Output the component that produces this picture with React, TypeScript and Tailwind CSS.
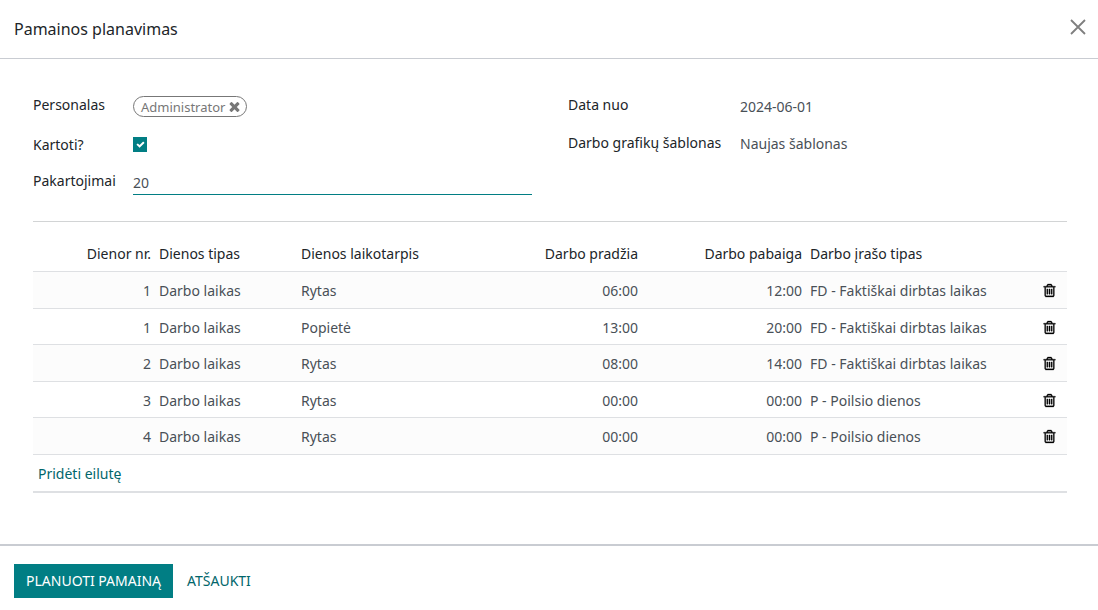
import { useState } from "react";

interface ShiftLine {
  id: number;
  day: number;
  dayType: string;
  period: string;
  start: string;
  end: string;
  entryType: string;
}

const initialLines: ShiftLine[] = [
  { id: 1, day: 1, dayType: "Darbo laikas", period: "Rytas", start: "06:00", end: "12:00", entryType: "FD - Faktiškai dirbtas laikas" },
  { id: 2, day: 1, dayType: "Darbo laikas", period: "Popietė", start: "13:00", end: "20:00", entryType: "FD - Faktiškai dirbtas laikas" },
  { id: 3, day: 2, dayType: "Darbo laikas", period: "Rytas", start: "08:00", end: "14:00", entryType: "FD - Faktiškai dirbtas laikas" },
  { id: 4, day: 3, dayType: "Darbo laikas", period: "Rytas", start: "00:00", end: "00:00", entryType: "P - Poilsio dienos" },
  { id: 5, day: 4, dayType: "Darbo laikas", period: "Rytas", start: "00:00", end: "00:00", entryType: "P - Poilsio dienos" },
];

function TrashIcon() {
  return (
    <svg viewBox="0 0 1792 1792" className="size-[15px] fill-current stroke-current stroke-[40]" aria-hidden="true">
      <path d="M704 736v576q0 14-9 23t-23 9h-64q-14 0-23-9t-9-23v-576q0-14 9-23t23-9h64q14 0 23 9t9 23zm256 0v576q0 14-9 23t-23 9h-64q-14 0-23-9t-9-23v-576q0-14 9-23t23-9h64q14 0 23 9t9 23zm256 0v576q0 14-9 23t-23 9h-64q-14 0-23-9t-9-23v-576q0-14 9-23t23-9h64q14 0 23 9t9 23zm128 724v-948h-896v948q0 22 7 40.5t14.5 27 10.5 8.5h832q3 0 10.5-8.5t14.5-27 7-40.5zm-672-1076h448l-48-117q-7-9-17-11h-317q-10 2-17 11zm928 32v64q0 14-9 23t-23 9h-96v948q0 83-47 143.5t-113 60.5h-832q-66 0-113-58.5t-47-141.5v-952h-96q-14 0-23-9t-9-23v-64q0-14 9-23t23-9h309l70-167q15-37 54-63t79-26h320q40 0 79 26t54 63l70 167h309q14 0 23 9t9 23z" />
    </svg>
  );
}

function RemoveIcon() {
  return (
    <svg viewBox="0 0 1792 1792" className="size-[15px] fill-current" aria-hidden="true">
      <path d="M1490 1322q0 40-28 68l-136 136q-28 28-68 28t-68-28l-294-294-294 294q-28 28-68 28t-68-28l-136-136q-28-28-28-68t28-68l294-294-294-294q-28-28-28-68t28-68l136-136q28-28 68-28t68 28l294 294 294-294q28-28 68-28t68 28l136 136q28 28 28 68t-28 68l-294 294 294 294q28 28 28 68z" />
    </svg>
  );
}

function CheckIcon() {
  return (
    <svg viewBox="0 0 1792 1792" className="size-[9px] fill-current" aria-hidden="true">
      <path d="M1671 566q0 40-28 68l-724 724-136 136q-28 28-68 28t-68-28l-136-136-362-362q-28-28-28-68t28-68l136-136q28-28 68-28t68 28l294 295 656-657q28-28 68-28t68 28l136 136q28 28 28 68z" />
    </svg>
  );
}

export default function App() {
  const [lines, setLines] = useState(initialLines);
  const [staff, setStaff] = useState(["Administrator"]);
  const [repeat, setRepeat] = useState(true);
  const [repetitions, setRepetitions] = useState("20");
  const [dateFrom, setDateFrom] = useState("2024-06-01");
  const [template, setTemplate] = useState("Naujas šablonas");

  const addLine = () => {
    const id = Math.max(0, ...lines.map((line) => line.id)) + 1;
    setLines([
      ...lines,
      { id, day: 1, dayType: "Darbo laikas", period: "Rytas", start: "00:00", end: "00:00", entryType: "" },
    ]);
  };

  return (
    <div
      role="dialog"
      aria-labelledby="dialog-title"
      className="bg-white font-['Noto_Sans','Open_Sans',sans-serif] text-sm leading-5 text-[#212529]"
    >
      <header className="flex h-[59px] items-center justify-between border-b border-[#c9ccd2] pl-[14px] pr-3">
        <h1 id="dialog-title" className="text-base leading-6">
          Pamainos planavimas
        </h1>
        <button type="button" aria-label="Uždaryti" className="mb-1 text-[#7f7f7f]">
          <svg viewBox="0 0 16 16" className="size-4" fill="none" stroke="currentColor" strokeWidth="1.8" aria-hidden="true">
            <path d="M1 1l14 14M15 1L1 15" />
          </svg>
        </button>
      </header>

      <main className="pb-[51px] pl-[33px] pr-[31px] pt-[35px]">
        <div className="grid grid-cols-2 gap-x-9 pb-[26px]">
          <div className="grid grid-cols-[100px_1fr] content-start">
            <div className="h-10 pt-px">Personalas</div>
            <div className="flex h-10 items-start gap-1 pt-0.5">
              {staff.map((name) => (
                <span
                  key={name}
                  className="flex h-[21px] items-center rounded-full border border-[#777] pl-[7px] pr-1 text-[13px] text-[#777]"
                >
                  {name}
                  <button
                    type="button"
                    aria-label="Pašalinti"
                    className="ml-0.5"
                    onClick={() => setStaff(staff.filter((item) => item !== name))}
                  >
                    <RemoveIcon />
                  </button>
                </span>
              ))}
            </div>

            <label htmlFor="repeat" className="h-9 pt-px">
              Kartoti?
            </label>
            <div className="h-9 pt-[3px]">
              <span className="relative flex h-[15px] w-[14px]">
                <input
                  id="repeat"
                  type="checkbox"
                  checked={repeat}
                  onChange={(e) => setRepeat(e.target.checked)}
                  className="h-full w-full appearance-none border border-[#017e84] checked:bg-[#017e84]"
                />
                {repeat && (
                  <span className="pointer-events-none absolute inset-0 flex items-center justify-center text-white">
                    <CheckIcon />
                  </span>
                )}
              </span>
            </div>

            <label htmlFor="repetitions" className="pt-px">
              Pakartojimai
            </label>
            <input
              id="repetitions"
              type="text"
              value={repetitions}
              onChange={(e) => setRepetitions(e.target.value)}
              className="h-[25px] w-full border-b border-[#017e84] text-[#495057] outline-none"
            />
          </div>

          <div className="grid grid-cols-[172px_1fr] content-start">
            <label htmlFor="date-from" className="h-[38px] pt-px">
              Data nuo
            </label>
            <input
              id="date-from"
              type="text"
              value={dateFrom}
              onChange={(e) => setDateFrom(e.target.value)}
              className="h-6 w-full text-[#495057] outline-none"
            />
            <label htmlFor="template" className="pt-px">
              Darbo grafikų šablonas
            </label>
            <input
              id="template"
              type="text"
              value={template}
              onChange={(e) => setTemplate(e.target.value)}
              className="h-[22px] w-full text-[#495057] outline-none"
            />
          </div>
        </div>

        <table className="w-full table-fixed border-collapse border-t border-[#d2d4d5] text-left text-[#495057]">
          <colgroup>
            <col className="w-[122px]" />
            <col className="w-[142px]" />
            <col className="w-[181px]" />
            <col className="w-[164px]" />
            <col className="w-[164px]" />
            <col />
            <col className="w-9" />
          </colgroup>
          <thead className="text-[#212529]">
            <tr className="h-[50px] border-b border-[#dee0e3]">
              <th className="px-1 pt-[14px] text-right font-normal">Dienor nr.</th>
              <th className="px-1 pt-[14px] font-normal">Dienos tipas</th>
              <th className="px-1 pt-[14px] font-normal">Dienos laikotarpis</th>
              <th className="px-1 pt-[14px] text-right font-normal">Darbo pradžia</th>
              <th className="px-1 pt-[14px] text-right font-normal">Darbo pabaiga</th>
              <th className="px-1 pt-[14px] font-normal">Darbo įrašo tipas</th>
              <th></th>
            </tr>
          </thead>
          <tbody>
            {lines.map((line) => (
              <tr key={line.id} className="border-b border-[#dee0e3] odd:h-[37px] odd:bg-[#fcfcfc] even:h-9">
                <td className="px-1 pt-0.5 text-right">{line.day}</td>
                <td className="px-1 pt-0.5">{line.dayType}</td>
                <td className="px-1 pt-0.5">{line.period}</td>
                <td className="px-1 pt-0.5 text-right">{line.start}</td>
                <td className="px-1 pt-0.5 text-right">{line.end}</td>
                <td className="px-1 pt-0.5">{line.entryType}</td>
                <td className="pt-px text-black">
                  <button
                    type="button"
                    aria-label="Ištrinti eilutę"
                    className="mx-auto block"
                    onClick={() => setLines(lines.filter((item) => item.id !== line.id))}
                  >
                    <TrashIcon />
                  </button>
                </td>
              </tr>
            ))}
          </tbody>
        </table>
        <div className="flex h-[38px] items-center border-b-2 border-[#dee0e3] pl-[5px] pt-px">
          <button type="button" className="text-[#01666b]" onClick={addLine}>
            Pridėti eilutę
          </button>
        </div>
      </main>

      <footer className="flex gap-[2px] border-t-2 border-[#c9ccd2] px-[14px] pb-3 pt-[18px]">
        <button type="button" className="h-[34px] bg-[#017e84] px-3 text-white">
          PLANUOTI PAMAINĄ
        </button>
        <button type="button" className="h-[34px] px-3 text-[#01666b]">
          ATŠAUKTI
        </button>
      </footer>
    </div>
  );
}
